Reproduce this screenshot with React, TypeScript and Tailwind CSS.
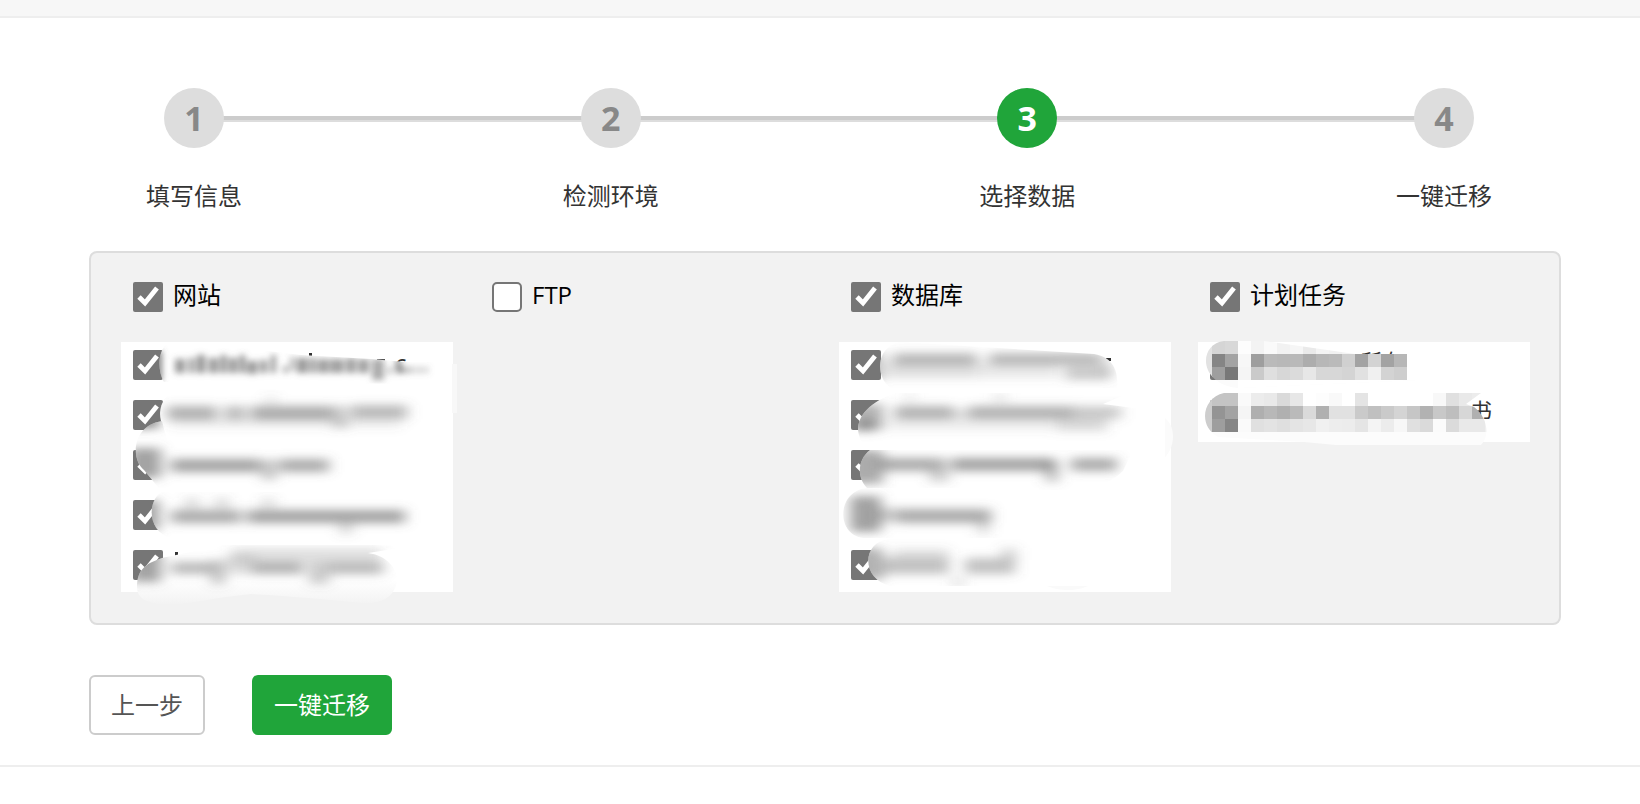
import { useState } from "react";
import type { ReactNode } from "react";

const steps = ["填写信息", "检测环境", "选择数据", "一键迁移"];
const currentStep = 3;

type Group = {
    id: string
    title: string
    checked: boolean
    rows: number
    cover?: ReactNode
}

// x, y, width, height, opacity
type Bar = [number, number, number, number, number]

function Bars({ bars, filter }: { bars: Bar[], filter: string }) {
    return (
        <g filter={filter} fill="#666">
            {bars.map(([x, y, w, h, o], i) => (
                <rect key={i} x={x} y={y} width={w} height={h} opacity={o} />
            ))}
        </g>
    )
}

function Smear({ id, d, children }: { id: string, d: string, children: ReactNode }) {
    return (
        <g clipPath={`url(#${id})`}>
            <clipPath id={id}><path d={d} /></clipPath>
            {children}
        </g>
    )
}

function Cover({ name, height, children }: { name: string, height: number, children: ReactNode }) {
    return (
        <svg className="absolute left-0 top-0 overflow-visible pointer-events-none" width="332" height={height} aria-hidden="true">
            <filter id={`${name}-fine`} x="-10%" y="-50%" width="120%" height="200%"><feGaussianBlur stdDeviation="3" /></filter>
            <filter id={`${name}-soft`} x="-20%" y="-50%" width="140%" height="200%"><feGaussianBlur stdDeviation="7 5" /></filter>
            {children}
        </svg>
    )
}

function WebsiteCover() {
    const soft = "url(#web-soft)"
    return (
        <Cover name="web" height={250}>
            <rect x="331" y="22" width="5" height="49" fill="#f8f8f8" />
            <text x="274" y="30" fontSize="24" fill="#333" fontFamily="Open Sans, sans-serif">c</text>
            <rect x="188" y="11" width="3" height="3" fill="#333" />
            <rect x="256" y="17" width="8" height="2" fill="#555" />
            <Smear id="web-1" d="M46 2 C36 10 37 30 43 40 L320 42 L320 20 L284 20 L250 17 L180 13 L80 1 Z">
                <rect x="30" y="0" width="300" height="45" fill="#fff" />
                <Bars filter="url(#web-fine)" bars={[
                    [34, 9, 7, 30, 0.8],
                    [54, 17, 10, 14, 0.65], [67, 16, 7, 15, 0.55], [76, 13, 8, 18, 0.7], [87, 16, 11, 15, 0.6],
                    [100, 13, 5, 18, 0.75], [107, 16, 10, 15, 0.6], [119, 13, 5, 18, 0.75], [126, 19, 10, 13, 0.65],
                    [138, 18, 9, 13, 0.55], [150, 13, 5, 18, 0.65], [162, 24, 5, 7, 0.55], [169, 15, 5, 14, 0.45],
                    [176, 16, 11, 15, 0.65], [189, 16, 5, 15, 0.7], [196, 17, 12, 14, 0.6], [209, 17, 14, 14, 0.6],
                    [225, 16, 10, 15, 0.6], [237, 17, 11, 14, 0.6], [251, 17, 12, 21, 0.55], [267, 25, 4, 7, 0.5],
                    [275, 17, 5, 14, 0.8], [278, 25, 8, 6, 0.6], [288, 25, 4, 6, 0.6], [296, 25, 4, 6, 0.5], [303, 25, 4, 6, 0.4],
                ]} />
            </Smear>
            <Smear id="web-2" d="M64 45 C32 52 34 84 52 96 L310 96 L310 52 Z">
                <rect x="30" y="44" width="290" height="54" fill="#fff" />
                <Bars filter={soft} bars={[
                    [46, 64, 50, 14, 0.5], [104, 64, 20, 14, 0.45], [130, 64, 82, 14, 0.55],
                    [212, 64, 14, 22, 0.35], [230, 63, 56, 14, 0.45], [50, 76, 230, 10, 0.1], [144, 54, 12, 8, 0.15],
                ]} />
            </Smear>
            <Smear id="web-3" d="M41 79 C10 84 10 118 23 128 L41 150 L200 150 C240 140 260 120 300 98 L46 98 Z">
                <rect x="10" y="78" width="300" height="75" fill="#fff" />
                <Bars filter={soft} bars={[
                    [8, 74, 30, 12, 0.8], [8, 106, 32, 30, 0.6],
                    [50, 117, 90, 13, 0.6], [141, 118, 14, 20, 0.4], [158, 117, 50, 13, 0.55],
                ]} />
            </Smear>
            <Smear id="web-4" d="M41 150 C26 158 26 190 50 196 L80 202 L310 202 L310 150 Z">
                <rect x="20" y="148" width="300" height="56" fill="#fff" />
                <Bars filter={soft} bars={[
                    [12, 158, 26, 30, 0.6], [50, 168, 70, 13, 0.55], [64, 156, 14, 10, 0.25], [94, 156, 14, 10, 0.25],
                    [126, 168, 158, 13, 0.6], [140, 156, 14, 10, 0.2], [218, 180, 14, 12, 0.25],
                ]} />
            </Smear>
            <rect x="54" y="210" width="3" height="6" fill="#333" />
            <Smear id="web-5" d="M16 245 C16 226 27 221 41 216 L102 203 L250 203 L290 204 L247 211 C268 214 276 228 276 238 C274 256 260 261 244 261 C210 258 170 254 130 252 C90 256 60 264 40 262 C24 260 16 256 16 245 Z">
                <linearGradient id="web-fade" x1="0" y1="0" x2="0" y2="1">
                    <stop offset="0.6" stopColor="#fff" />
                    <stop offset="1" stopColor="#f2f2f2" />
                </linearGradient>
                <rect x="10" y="200" width="290" height="64" fill="url(#web-fade)" />
                <Bars filter={soft} bars={[
                    [10, 208, 30, 32, 0.6], [50, 220, 42, 12, 0.45], [90, 218, 14, 24, 0.4], [106, 214, 28, 18, 0.25],
                    [132, 220, 50, 12, 0.5], [188, 220, 20, 22, 0.35], [208, 220, 54, 12, 0.45], [110, 206, 150, 14, 0.2],
                ]} />
            </Smear>
        </Cover>
    )
}

function DatabaseCover() {
    const soft = "url(#db-soft)"
    return (
        <Cover name="db" height={250}>
            <rect x="267" y="16" width="5" height="3" fill="#333" />
            <Smear id="db-1" d="M62 0 C36 4 36 36 52 46 L278 46 C280 22 268 14 255 12 Z">
                <rect x="30" y="0" width="260" height="48" fill="#fff" />
                <Bars filter={soft} bars={[
                    [26, 10, 16, 28, 0.5], [54, 11, 84, 12, 0.45], [150, 11, 112, 12, 0.45],
                    [46, 20, 92, 16, 0.2], [138, 20, 82, 16, 0.15], [226, 24, 46, 14, 0.35], [262, 12, 10, 22, 0.15],
                ]} />
            </Smear>
            <Smear id="db-2" d="M57 51 C30 60 19 74 19 88 C20 98 25 104 31 108 L300 125 C326 124 334 108 334 94 C334 78 322 72 310 68 L264 62 L290 51 Z">
                <rect x="10" y="48" width="320" height="78" fill="#fff" />
                <rect x="326" y="68" width="10" height="58" fill="#fbfbfb" />
                <Bars filter={soft} bars={[
                    [12, 62, 32, 26, 0.5], [18, 78, 16, 11, 0.6], [56, 64, 58, 13, 0.5], [130, 64, 104, 13, 0.5],
                    [112, 67, 20, 9, 0.2], [234, 64, 48, 13, 0.35], [218, 76, 50, 13, 0.25], [50, 76, 168, 12, 0.12],
                    [66, 51, 10, 9, 0.15], [154, 51, 14, 9, 0.15],
                ]} />
            </Smear>
            <Smear id="db-3" d="M31 108 C18 118 18 136 28 146 L230 148 C270 146 280 132 284 129 L294 108 Z">
                <rect x="10" y="106" width="300" height="44" fill="#fff" />
                <Bars filter={soft} bars={[
                    [8, 108, 36, 34, 0.55], [40, 116, 66, 13, 0.55], [90, 128, 20, 12, 0.3],
                    [112, 116, 102, 13, 0.6], [206, 118, 14, 22, 0.4], [232, 116, 46, 13, 0.55],
                ]} />
            </Smear>
            <Smear id="db-4" d="M31 146 C-4 146 -4 196 27 196 L200 196 L200 146 Z">
                <rect x="0" y="144" width="210" height="54" fill="#fff" />
                <Bars filter={soft} bars={[
                    [11, 154, 31, 36, 0.6], [36, 166, 22, 14, 0.35], [58, 167, 94, 14, 0.55], [138, 178, 12, 14, 0.25],
                ]} />
            </Smear>
            <Smear id="db-5" d="M50 197 C22 200 22 238 52 244 L208 244 C222 250 242 250 256 240 L256 197 Z">
                <rect x="20" y="196" width="240" height="54" fill="#fff" />
                <rect x="204" y="244" width="52" height="6" fill="#fafafa" />
                <Bars filter={soft} bars={[
                    [12, 206, 32, 32, 0.5], [44, 216, 66, 16, 0.4], [126, 216, 50, 16, 0.4], [54, 207, 56, 10, 0.2],
                    [162, 206, 16, 12, 0.25], [112, 236, 14, 8, 0.2],
                ]} />
            </Smear>
        </Cover>
    )
}

// each cell is 13px wide, first column is x = 14
const mosaic: { y: number, cells: string[] }[] = [
    { y: -1, cells: ["#d5d5d5", "#d8d8d8", "#fdfdfd", "#f3f3f3", "#fafafa", "#f2f2f2", "#f6f6f6", "#eaeaea", "#f4f4f4", "#f1f1f1", "#f3f3f3"] },
    { y: 12, cells: ["#858585", "#a3a3a3", "#f7f7f7", "#9e9e9e", "#bababa", "#b8b8b8", "#b9b9b9", "#adadad", "#b7b7b7", "#bababa", "#d0d0d0", "#a3a3a3", "#d3d3d3", "#a3a3a3", "#b7b7b7"] },
    { y: 25, cells: ["#9e9e9e", "#787878", "#f5f5f5", "#cacaca", "#dfdfdf", "#d7d7d7", "#dbdbdb", "#e7e7e7", "#d7d7d7", "#d7d7d7", "#d4d4d4", "#e1e1e1", "#f0f0f0", "#d3d3d3", "#cecece"] },
    { y: 51, cells: ["#c4c4c4", "#c4c4c4", "#fafafa", "#ececec", "#e9e9e9", "#dadada", "#e7e7e7", "#fff", "#fdfdfd", "#f9f9f9", "#fff", "#e4e4e4", "#fff", "#fff", "#fff", "#fff", "#fff", "#f8f8f8", "#e0e0e0", "#e9e9e9", "#ececec"] },
    { y: 64, cells: ["#949494", "#a3a3a3", "#f5f5f5", "#afafaf", "#b8b8b8", "#b0b0b0", "#bababa", "#dadada", "#b0b0b0", "#e1e1e1", "#e1e1e1", "#cacaca", "#c0c0c0", "#cacaca", "#d4d4d4", "#c6c6c6", "#b2b2b2", "#c8c8c8", "#bebebe", "#d7d7d7", "#b0b0b0"] },
    { y: 77, cells: ["#9e9e9e", "#868686", "#fafafa", "#e0e0e0", "#e3e3e3", "#dfdfdf", "#e4e4e4", "#e7e7e7", "#f0f0f0", "#ededed", "#ececec", "#e5e5e5", "#f4f4f4", "#ececec", "#f7f7f7", "#e0e0e0", "#dadada", "#fbfbfb", "#dbdbdb", "#e9e9e9", "#e9e9e9"] },
]

function MosaicRows({ from, to }: { from: number, to: number }) {
    return (
        <g shapeRendering="crispEdges">
            {mosaic.slice(from, to).map(({ y, cells }) => cells.map((fill, i) => (
                <rect key={`${y}-${i}`} x={14 + i * 13} y={y} width="13" height="13" fill={fill} />
            )))}
        </g>
    )
}

function CronCover() {
    return (
        <Cover name="cron" height={100}>
            <g fill="#333" fontSize="22" fontFamily="Noto Sans CJK SC, sans-serif">
                <text x="162" y="28">所有</text>
                <text x="272" y="77">书</text>
            </g>
            <Smear id="cron-1" d="M26 -1 C0 2 0 42 40 46 L222 38 L222 12 L157 12 L66 -1 Z">
                <rect x="0" y="-1" width="15" height="39" fill="#e2e2e2" />
                <rect x="0" y="38" width="222" height="10" fill="#fbfbfb" />
                <rect x="40" y="38" width="182" height="10" fill="#fff" />
                <MosaicRows from={0} to={3} />
            </Smear>
            <Smear id="cron-2" d="M26 51 C4 56 0 84 20 95 L106 100 L138 103 L283 103 C292 94 290 76 276 65 L268 62 L283 51 Z">
                <rect x="0" y="51" width="15" height="39" fill="#cdcdcd" />
                <rect x="14" y="90" width="276" height="14" fill="#fcfcfc" />
                <rect x="274" y="77" width="16" height="13" fill="#f0f0f0" />
                <MosaicRows from={3} to={6} />
            </Smear>
        </Cover>
    )
}

const groups: Group[] = [
    { id: "site", title: "网站", checked: true, rows: 5, cover: <WebsiteCover /> },
    { id: "ftp", title: "FTP", checked: false, rows: 0 },
    { id: "database", title: "数据库", checked: true, rows: 5, cover: <DatabaseCover /> },
    { id: "cron", title: "计划任务", checked: true, rows: 2, cover: <CronCover /> },
]

function Stepper() {
    return (
        <ol className="relative flex justify-between ml-[57px] mr-[69px]">
            <li aria-hidden="true" className="absolute left-12 right-12 top-7 h-[6px] bg-[#ccc] border-b-2 border-[#ddd]" />
            {steps.map((name, i) => (
                <li key={name} className="relative flex flex-col items-center w-24 gap-7">
                    <span className={i + 1 === currentStep
                        ? "size-[60px] rounded-full bg-[#20a53a] text-white text-[34px] leading-[60px] font-bold text-center"
                        : "size-[60px] rounded-full bg-[#ddd] text-[#888] text-[34px] leading-[60px] font-bold text-center"}>
                        {i + 1}
                    </span>
                    <span className="text-2xl leading-10 text-[#333] whitespace-nowrap">{name}</span>
                </li>
            ))}
        </ol>
    )
}

function DataGroup({ group }: { group: Group }) {
    const [checked, setChecked] = useState(group.checked)

    return (
        <div>
            <div className="flex items-center h-[60px] pl-3 gap-[10px]">
                <input
                    id={group.id}
                    type="checkbox"
                    className={checked
                        ? "size-[30px] shrink-0 accent-[#767676]"
                        : "size-[30px] shrink-0 appearance-none bg-white border-2 border-[#767676] rounded-[5px]"}
                    checked={checked}
                    onChange={() => setChecked(!checked)}
                />
                <label htmlFor={group.id} className="text-2xl leading-8 text-black pb-1">{group.title}</label>
            </div>
            {
                group.rows > 0 &&
                <ul className="relative mt-[15px] bg-white">
                    {Array.from({ length: group.rows }, (_, i) => (
                        <li key={i} className="h-[50px] pl-3 pt-2">
                            <input
                                type="checkbox"
                                defaultChecked
                                aria-label={`${group.title} ${i + 1}`}
                                className="block size-[30px] accent-[#767676]"
                            />
                        </li>
                    ))}
                    {group.cover}
                </ul>
            }
        </div>
    )
}

export default function App() {
    return (
        <div className="bg-white font-['Open_Sans','Noto_Sans_CJK_SC',sans-serif]">
            <div className="h-[18px] bg-[#f7f7f7] border-b-2 border-[#eee]" />
            <main className="pt-[70px] pb-[30px] pl-[89px] pr-[79px] border-b-2 border-[#eee]">
                <Stepper />
                <section className="grid grid-cols-4 gap-x-[27px] mt-[35px] pt-[14px] pb-[31px] pl-[30px] pr-[29px] bg-[#f2f2f2] border-2 border-[#ddd] rounded-lg">
                    {groups.map((group) => <DataGroup key={group.id} group={group} />)}
                </section>
                <div className="flex gap-[47px] mt-[50px]">
                    <button type="button" className="h-[60px] px-5 border-2 border-[#ccc] rounded-md bg-white text-2xl text-[#555]">上一步</button>
                    <button type="button" className="h-[60px] px-[22px] rounded-md bg-[#20a53a] text-2xl text-white">一键迁移</button>
                </div>
            </main>
        </div>
    )
}
